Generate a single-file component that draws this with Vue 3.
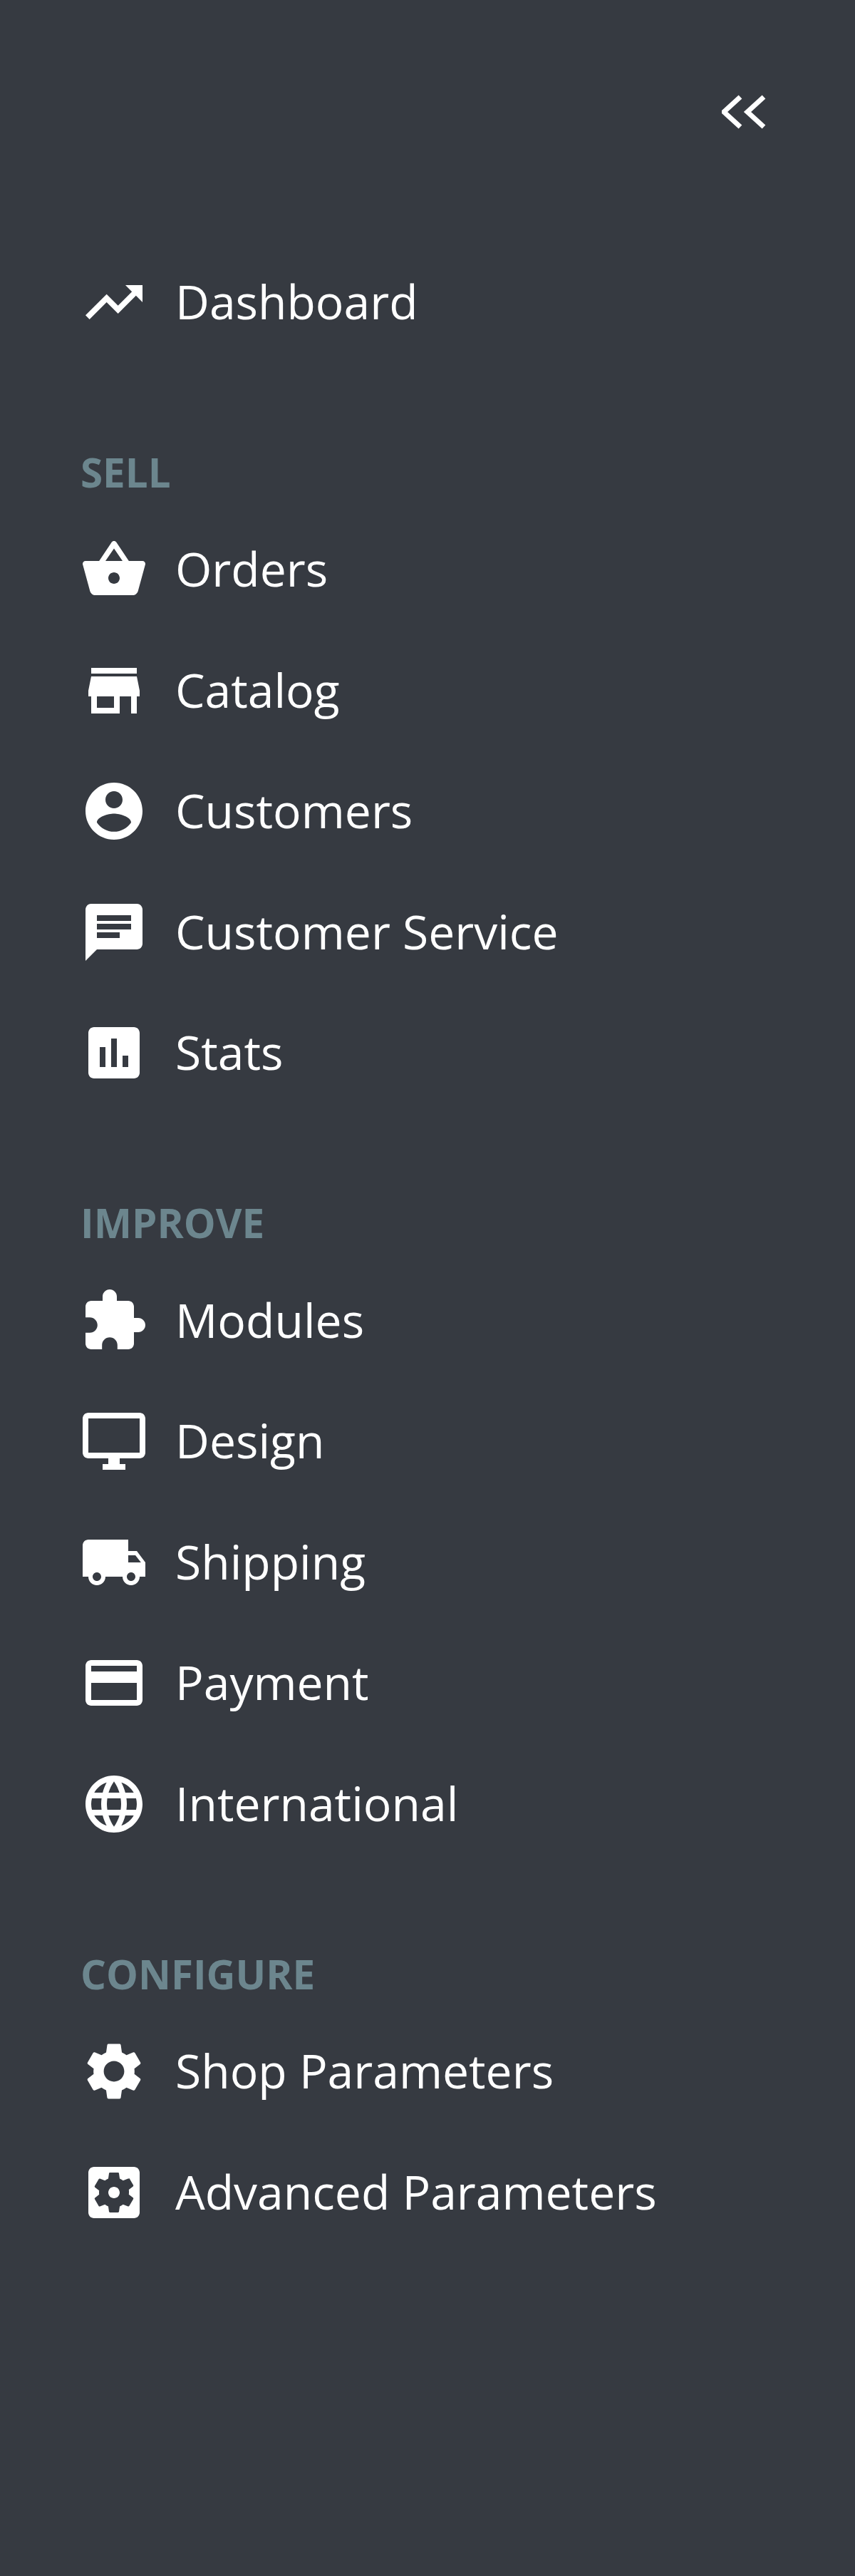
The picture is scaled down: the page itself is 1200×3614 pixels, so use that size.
<script setup>
const icons = {
  dashboard: 'M16 6l2.29 2.29-4.88 4.88-4-4L2 16.59 3.41 18l6-6 4 4 6.3-6.29L22 12V6z',
  orders: 'M17.21 9l-4.38-6.56c-.19-.28-.51-.42-.83-.42-.32 0-.64.14-.83.43L6.79 9H2c-.55 0-1 .45-1 1 0 .09.01.18.04.27l2.54 9.27c.23.84 1 1.46 1.92 1.46h13c.92 0 1.69-.62 1.93-1.46l2.54-9.27L23 10c0-.55-.45-1-1-1h-4.79zM9 9l3-4.4L15 9H9zm3 8c-1.1 0-2-.9-2-2s.9-2 2-2 2 .9 2 2-.9 2-2 2z',
  catalog: 'M20 4H4v2h16V4zm1 10v-2l-1-5H4l-1 5v2h1v6h10v-6h4v6h2v-6h1zm-9 4H6v-4h6v4z',
  customers: 'M12 2C6.48 2 2 6.48 2 12s4.48 10 10 10 10-4.48 10-10S17.52 2 12 2zm0 3c1.66 0 3 1.34 3 3s-1.34 3-3 3-3-1.34-3-3 1.34-3 3-3zm0 14.2c-2.5 0-4.71-1.28-6-3.22.03-1.99 4-3.08 6-3.08 1.99 0 5.97 1.09 6 3.08-1.29 1.94-3.5 3.22-6 3.22z',
  service: 'M20 2H4c-1.1 0-1.99.9-1.99 2L2 22l4-4h14c1.1 0 2-.9 2-2V4c0-1.1-.9-2-2-2zM6 9h12v2H6V9zm8 5H6v-2h8v2zm4-6H6V6h12v2z',
  stats: 'M19 3H5c-1.1 0-2 .9-2 2v14c0 1.1.9 2 2 2h14c1.1 0 2-.9 2-2V5c0-1.1-.9-2-2-2zM9 17H7v-7h2v7zm4 0h-2V7h2v10zm4 0h-2v-4h2v4z',
  modules: 'M20.5 11H19V7c0-1.1-.9-2-2-2h-4V3.5C13 2.12 11.88 1 10.5 1S8 2.12 8 3.5V5H4c-1.1 0-1.99.9-1.99 2v3.8H3.5c1.49 0 2.7 1.21 2.7 2.7s-1.21 2.7-2.7 2.7H2V20c0 1.1.9 2 2 2h3.8v-1.5c0-1.49 1.21-2.7 2.7-2.7 1.49 0 2.7 1.21 2.7 2.7V22H17c1.1 0 2-.9 2-2v-4h1.5c1.38 0 2.5-1.12 2.5-2.5S21.88 11 20.5 11z',
  design: 'M21 2H3c-1.1 0-2 .9-2 2v12c0 1.1.9 2 2 2h7v2H8v2h8v-2h-2v-2h7c1.1 0 2-.9 2-2V4c0-1.1-.9-2-2-2zm0 14H3V4h18v12z',
  shipping: 'M20 8h-3V4H3c-1.1 0-2 .9-2 2v11h2c0 1.66 1.34 3 3 3s3-1.34 3-3h6c0 1.66 1.34 3 3 3s3-1.34 3-3h2v-5l-3-4zM6 18.5c-.83 0-1.5-.67-1.5-1.5s.67-1.5 1.5-1.5 1.5.67 1.5 1.5-.67 1.5-1.5 1.5zm13.5-9l1.96 2.5H17V9.5h2.5zm-1.5 9c-.83 0-1.5-.67-1.5-1.5s.67-1.5 1.5-1.5 1.5.67 1.5 1.5-.67 1.5-1.5 1.5z',
  payment: 'M20 4H4c-1.11 0-1.99.89-1.99 2L2 18c0 1.11.89 2 2 2h16c1.11 0 2-.89 2-2V6c0-1.11-.89-2-2-2zm0 14H4v-6h16v6zm0-10H4V6h16v2z',
  international: 'M11.99 2C6.47 2 2 6.48 2 12s4.47 10 9.99 10C17.52 22 22 17.52 22 12S17.52 2 11.99 2zm6.93 6h-2.95c-.32-1.25-.78-2.45-1.38-3.56 1.84.63 3.37 1.91 4.33 3.56zM12 4.04c.83 1.2 1.48 2.53 1.91 3.96h-3.82c.43-1.43 1.08-2.76 1.91-3.96zM4.26 14C4.1 13.36 4 12.69 4 12s.1-1.36.26-2h3.38c-.08.66-.14 1.32-.14 2 0 .68.06 1.34.14 2H4.26zm.82 2h2.95c.32 1.25.78 2.45 1.38 3.56-1.84-.63-3.37-1.9-4.33-3.56zm2.95-8H5.08c.96-1.66 2.49-2.93 4.33-3.56C8.81 5.55 8.35 6.75 8.03 8zM12 19.96c-.83-1.2-1.48-2.53-1.91-3.96h3.82c-.43 1.43-1.08 2.76-1.91 3.96zM14.34 14H9.66c-.09-.66-.16-1.32-.16-2 0-.68.07-1.35.16-2h4.68c.09.65.16 1.32.16 2 0 .68-.07 1.34-.16 2zm.25 5.56c.6-1.11 1.06-2.31 1.38-3.56h2.95c-.96 1.65-2.49 2.93-4.33 3.56zM16.36 14c.08-.66.14-1.32.14-2 0-.68-.06-1.34-.14-2h3.38c.16.64.26 1.31.26 2s-.1 1.36-.26 2h-3.38z',
  shop: 'M19.14 12.94c.04-.3.06-.61.06-.94 0-.32-.02-.64-.07-.94l2.03-1.58c.18-.14.23-.41.12-.61l-1.92-3.32c-.12-.22-.37-.29-.59-.22l-2.39.96c-.5-.38-1.03-.7-1.62-.94l-.36-2.54c-.04-.24-.24-.41-.48-.41h-3.84c-.24 0-.43.17-.47.41l-.36 2.54c-.59.24-1.13.57-1.62.94l-2.39-.96c-.22-.08-.47 0-.59.22L2.74 8.87c-.12.21-.08.47.12.61l2.03 1.58c-.05.3-.09.63-.09.94s.02.64.07.94l-2.03 1.58c-.18.14-.23.41-.12.61l1.92 3.32c.12.22.37.29.59.22l2.39-.96c.5.38 1.03.7 1.62.94l.36 2.54c.05.24.24.41.48.41h3.84c.24 0 .44-.17.47-.41l.36-2.54c.59-.24 1.13-.56 1.62-.94l2.39.96c.22.08.47 0 .59-.22l1.92-3.32c.12-.22.07-.47-.12-.61l-2.01-1.58zM12 15.6c-1.98 0-3.6-1.62-3.6-3.6s1.62-3.6 3.6-3.6 3.6 1.62 3.6 3.6-1.62 3.6-3.6 3.6z',
  advanced: 'M12 10c-1.1 0-2 .9-2 2s.9 2 2 2 2-.9 2-2-.9-2-2-2zm7-7H5c-1.1 0-2 .9-2 2v14c0 1.1.9 2 2 2h14c1.1 0 2-.9 2-2V5c0-1.1-.9-2-2-2zm-1.75 9c0 .23-.02.46-.05.68l1.48 1.16c.13.11.17.3.08.45l-1.4 2.42c-.09.15-.27.21-.43.15l-1.74-.7c-.36.28-.76.51-1.18.69l-.26 1.85c-.03.17-.18.3-.35.3h-2.8c-.17 0-.32-.13-.35-.29l-.26-1.85c-.43-.18-.82-.41-1.18-.69l-1.74.7c-.16.06-.34 0-.43-.15l-1.4-2.42c-.09-.15-.05-.34.08-.45l1.48-1.16c-.03-.23-.05-.46-.05-.69 0-.23.02-.46.05-.68l-1.48-1.16c-.13-.11-.17-.3-.08-.45l1.4-2.42c.09-.15.27-.21.43-.15l1.74.7c.36-.28.76-.51 1.18-.69l.26-1.85c.03-.17.18-.3.35-.3h2.8c.17 0 .32.13.35.29l.26 1.85c.43.18.82.41 1.18.69l1.74-.7c.16-.06.34 0 .43-.15l1.4 2.42c.09.15.05.34-.08.45l-1.48 1.16c.03.23.05.46.05.69z'
}

const sections = [
  { title: '', items: [{ icon: 'dashboard', label: 'Dashboard' }] },
  {
    title: 'SELL',
    items: [
      { icon: 'orders', label: 'Orders' },
      { icon: 'catalog', label: 'Catalog' },
      { icon: 'customers', label: 'Customers' },
      { icon: 'service', label: 'Customer Service' },
      { icon: 'stats', label: 'Stats' }
    ]
  },
  {
    title: 'IMPROVE',
    items: [
      { icon: 'modules', label: 'Modules' },
      { icon: 'design', label: 'Design' },
      { icon: 'shipping', label: 'Shipping' },
      { icon: 'payment', label: 'Payment' },
      { icon: 'international', label: 'International' }
    ]
  },
  {
    title: 'CONFIGURE',
    items: [
      { icon: 'shop', label: 'Shop Parameters' },
      { icon: 'advanced', label: 'Advanced Parameters' }
    ]
  }
]
</script>

<template>
  <div class="sidebar">
    <div class="collapse">
      <svg class="collapse-icon" width="62" height="50" viewBox="0 0 62 50">
        <path d="M26 4 L3 25 L26 46 M59 4 L36 25 L59 46" />
      </svg>
    </div>
    <nav>
      <section v-for="section in sections" :key="section.title" class="section">
        <h4 v-if="section.title" class="section-title">{{ section.title }}</h4>
        <a v-for="item in section.items" :key="item.label" class="item">
          <svg class="item-icon" viewBox="0 0 24 24"><path :d="icons[item.icon]" /></svg>
          <span class="item-label">{{ item.label }}</span>
        </a>
      </section>
    </nav>
  </div>
</template>

<style>
body {
  background: #363a41;
}
</style>

<style scoped>
.sidebar {
  box-sizing: border-box;
  height: 3614px;
  background: #363a41;
  font-family: "Open Sans", sans-serif;
  overflow: hidden;
}

.collapse {
  display: flex;
  justify-content: flex-end;
  padding: 132px 125px 0 0;
  height: 339px;
  box-sizing: border-box;
}

.collapse-icon {
  fill: none;
  stroke: #fff;
  stroke-width: 7;
}

.section {
  margin-bottom: 99px;
}

.section-title {
  margin: 0;
  padding-left: 113px;
  height: 107px;
  line-height: 110px;
  font-size: 56.5px;
  font-weight: 700;
  color: #6c868e;
}

.item {
  display: flex;
  align-items: center;
  height: 169.5px;
  padding-left: 112px;
  font-size: 66px;
  color: #fff;
}

.item-icon {
  width: 96px;
  height: 96px;
  fill: #fff;
  margin-right: 38px;
  flex-shrink: 0;
}

.item-label {
  margin-bottom: 4px;
}
</style>
